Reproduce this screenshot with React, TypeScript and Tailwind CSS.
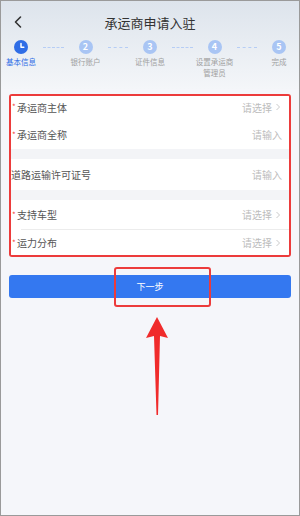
import React from "react";

const font = { fontFamily: '"Noto Sans CJK SC", "Noto Sans", sans-serif' };

function Row({ label, req, value, arrow, h = "h-[29px]" }: { label: string; req?: boolean; value: string; arrow?: boolean; h?: string }) {
  return (
    <div className={"flex items-center bg-white pr-[7px] " + h}>
      <div className="flex items-center">
        {req ? <span className="text-[#f2463c] text-[8px] w-[5px] ml-[1px] leading-none">*</span> : null}
        <span className="text-[10px] text-[#555]">{label}</span>
      </div>
      <div className="ml-auto flex items-center text-[10px] text-[#bcbcbc]">
        <span>{value}</span>
        {arrow ? (
          <svg width="8" height="8" viewBox="0 0 8 8" className="ml-[2px]">
            <path d="M2.5 1 L5.5 4 L2.5 7" fill="none" stroke="#c4c4c4" strokeWidth="0.9" />
          </svg>
        ) : null}
      </div>
    </div>
  );
}

function Step({ n, label, active }: { n: number; label: React.ReactNode; active?: boolean }) {
  return (
    <div className="flex flex-col items-center w-[40px]">
      <div
        className={
          "w-[14px] h-[14px] rounded-full flex items-center justify-center text-white text-[9px] font-bold " +
          (active ? "bg-[#2f6de6]" : "bg-[#a9c5f4]")
        }
      >
        {active ? (
          <svg width="14" height="14" viewBox="0 0 14 14">
            <path d="M7 3.5 V7.3 H9.8" fill="none" stroke="#fff" strokeWidth="1.5" strokeLinecap="round" strokeLinejoin="round" />
          </svg>
        ) : (
          n
        )}
      </div>
      <div
        className={
          "mt-[2px] text-[7.5px] leading-[11px] text-center whitespace-nowrap " +
          (active ? "text-[#2f6de6]" : "text-[#a0a0a0]")
        }
      >
        {label}
      </div>
    </div>
  );
}

function Dash() {
  return <div className="flex-1 mt-[7px] h-0 border-t-[1.5px] border-dashed border-[#b6cdf5] mx-[2px]" />;
}

export default function App() {
  return (
    <div style={font} className="w-[300px] h-[516px] bg-[#f5f6fa] border border-[#9a9a9a] flex flex-col overflow-hidden">
      <div className="bg-gradient-to-b from-[#dde4ec] to-[#f4f6f9] h-[88px] flex flex-col">
        <div className="flex items-center h-[39px] relative">
          <svg width="14" height="14" viewBox="0 0 14 14" className="absolute left-[10px] top-[14px]">
            <path d="M9.5 2 L4.5 7 L9.5 12" fill="none" stroke="#333" strokeWidth="1.6" strokeLinecap="round" strokeLinejoin="round" />
          </svg>
          <div className="flex-1 text-center text-[13px] text-[#333] pt-[4px]">承运商申请入驻</div>
        </div>
        <div className="flex items-start">
          <Step n={1} label="基本信息" active />
          <Dash />
          <Step n={2} label="银行账户" />
          <Dash />
          <Step n={3} label="证件信息" />
          <Dash />
          <Step n={4} label={<>设置承运商<br />管理员</>} />
          <Dash />
          <Step n={5} label="完成" />
        </div>
      </div>

      <div className="mx-[8px] mt-[5px] border-2 border-[#ec3b3b] rounded-[3px] overflow-hidden bg-white">
        <Row label="承运商主体" req value="请选择" arrow h="h-[24px] pb-[2px]" />
        <Row label="承运商全称" req value="请输入" />
        <div className="h-[10px] bg-[#f3f4f7]" />
        <Row label="道路运输许可证号" value="请输入" h="h-[31px]" />
        <div className="h-[10px] bg-[#f3f4f7]" />
        <Row label="支持车型" req value="请选择" arrow h="h-[29px]" />
        <div className="ml-[10px] border-t border-[#ececec]" />
        <Row label="运力分布" req value="请选择" arrow h="h-[25px]" />
      </div>

      <div className="relative mx-[8px] mt-[18px]">
        <div className="h-[23px] rounded-[3px] bg-[#3478f0] flex items-center justify-center text-white text-[9px]">
          下一步
        </div>
        <div className="absolute left-[105px] top-[-8px] w-[97px] h-[40px] border-2 border-[#ec3b3b] rounded-[3px]" />
      </div>

      <div className="flex justify-center mt-[19px] pl-[14px]">
        <svg width="24" height="100" viewBox="0 0 24 100">
          <path d="M12 0 L23 21 L15 19 L13 98 L11.5 98 L9 19 L1 21 Z" fill="#f02b2b" />
        </svg>
      </div>
    </div>
  );
}
